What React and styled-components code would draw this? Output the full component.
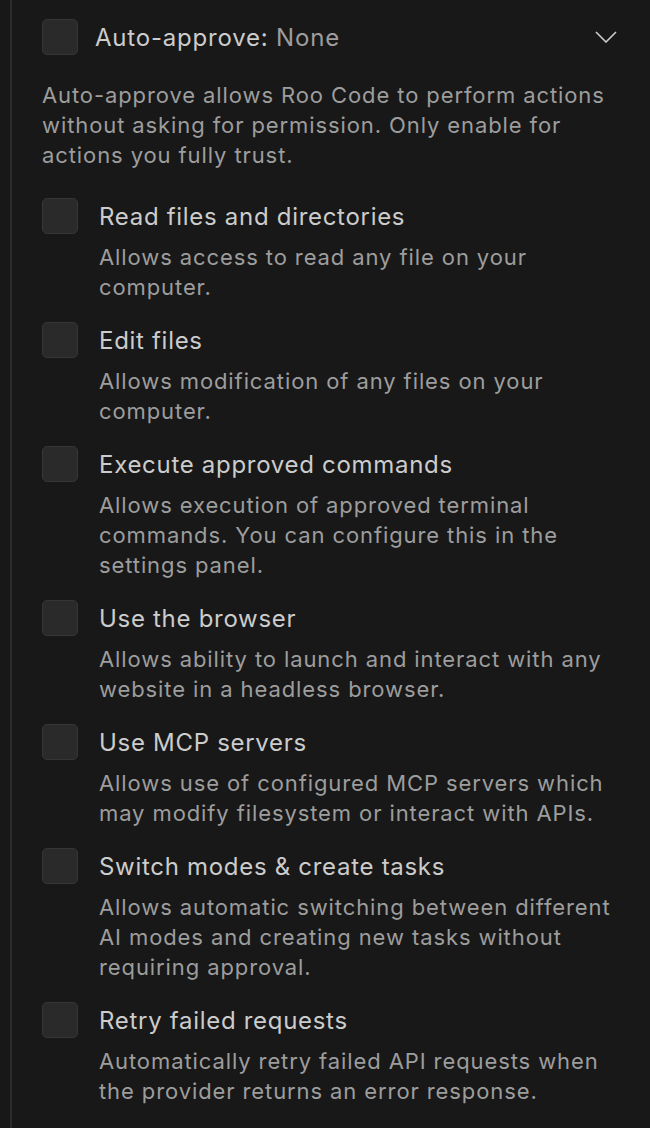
import styled, { createGlobalStyle } from "styled-components";

const GlobalStyle = createGlobalStyle`
  html, body {
    margin: 0;
    padding: 0;
    background: #181818;
  }
  body {
    font-family: Inter, "Noto Sans", sans-serif;
    -webkit-font-smoothing: antialiased;
  }
`;

const items = [
  {
    title: "Read files and directories",
    desc: "Allows access to read any file on your computer.",
  },
  {
    title: "Edit files",
    desc: "Allows modification of any files on your computer.",
  },
  {
    title: "Execute approved commands",
    desc: "Allows execution of approved terminal commands. You can configure this in the settings panel.",
  },
  {
    title: "Use the browser",
    desc: "Allows ability to launch and interact with any website in a headless browser.",
  },
  {
    title: "Use MCP servers",
    desc: "Allows use of configured MCP servers which may modify filesystem or interact with APIs.",
  },
  {
    title: "Switch modes & create tasks",
    desc: "Allows automatic switching between different AI modes and creating new tasks without requiring approval.",
  },
  {
    title: "Retry failed requests",
    desc: "Automatically retry failed API requests when the provider returns an error response.",
  },
];

export default function App() {
  return (
    <>
      <GlobalStyle />
      <Page>
        <Panel>
          <Header>
            <Checkbox />
            <HeaderTitle>
              Auto-approve: <Muted>None</Muted>
            </HeaderTitle>
            <Chevron width="22" height="12" viewBox="0 0 22 12">
              <polyline points="1,1 11,11 21,1" />
            </Chevron>
          </Header>
          <Intro>
            Auto-approve allows Roo Code to perform actions without asking for
            permission. Only enable for actions you fully trust.
          </Intro>
          <List>
            {items.map((item) => (
              <Item key={item.title}>
                <Checkbox />
                <ItemText>
                  <ItemTitle>{item.title}</ItemTitle>
                  <ItemDesc>{item.desc}</ItemDesc>
                </ItemText>
              </Item>
            ))}
          </List>
        </Panel>
      </Page>
    </>
  );
}

const Page = styled.div`
  min-height: 1128px;
  padding-left: 10px;
  box-sizing: border-box;
`;

const Panel = styled.div`
  min-height: 1128px;
  box-sizing: border-box;
  border-left: 2px solid #2b2b2b;
  padding: 19px 32px 0 30px;
`;

const Header = styled.div`
  display: flex;
  align-items: center;
  height: 36px;
`;

const Checkbox = styled.div`
  flex: none;
  width: 34px;
  height: 34px;
  border: 1px solid #363636;
  border-radius: 5px;
  background: #2a2a2a;
`;

const HeaderTitle = styled.div`
  flex: 1;
  margin-left: 17px;
  font-size: 24px;
  letter-spacing: 0.8px;
  color: #cccccc;
`;

const Muted = styled.span`
  color: #9d9d9d;
`;

const Chevron = styled.svg`
  flex: none;
  margin-right: 1px;
  fill: none;
  stroke: #cccccc;
  stroke-width: 1.6;
`;

const Intro = styled.p`
  margin: 25px 0 0;
  font-size: 22px;
  line-height: 30px;
  letter-spacing: 0.9px;
  color: #9d9d9d;
`;

const List = styled.div`
  display: flex;
  flex-direction: column;
  gap: 20px;
  margin-top: 28px;
`;

const Item = styled.div`
  display: flex;
  align-items: flex-start;
  gap: 21px;
`;

const ItemText = styled.div`
  display: flex;
  flex-direction: column;
  gap: 10px;
  padding-top: 2px;
`;

const ItemTitle = styled.div`
  font-size: 24px;
  line-height: 34px;
  letter-spacing: 0.7px;
  color: #cccccc;
`;

const ItemDesc = styled.div`
  margin-top: -2px;
  font-size: 22px;
  line-height: 30px;
  letter-spacing: 0.9px;
  color: #9d9d9d;
`;
